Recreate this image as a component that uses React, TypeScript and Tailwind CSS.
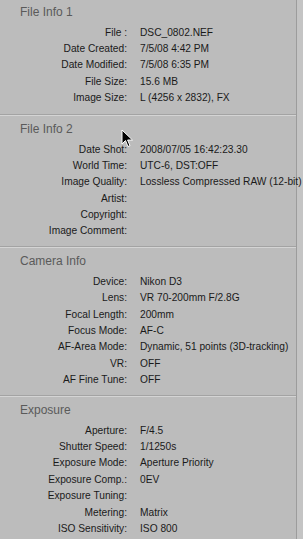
import React from 'react';

type Row = { label: string; value?: string };

const sections: { title: string; rows: Row[] }[] = [
  {
    title: 'File Info 1',
    rows: [
      { label: 'File :', value: 'DSC_0802.NEF' },
      { label: 'Date Created:', value: '7/5/08 4:42 PM' },
      { label: 'Date Modified:', value: '7/5/08 6:35 PM' },
      { label: 'File Size:', value: '15.6 MB' },
      { label: 'Image Size:', value: 'L (4256 x 2832), FX' },
    ],
  },
  {
    title: 'File Info 2',
    rows: [
      { label: 'Date Shot:', value: '2008/07/05 16:42:23.30' },
      { label: 'World Time:', value: 'UTC-6, DST:OFF' },
      { label: 'Image Quality:', value: 'Lossless Compressed RAW (12-bit)' },
      { label: 'Artist:' },
      { label: 'Copyright:' },
      { label: 'Image Comment:' },
    ],
  },
  {
    title: 'Camera Info',
    rows: [
      { label: 'Device:', value: 'Nikon D3' },
      { label: 'Lens:', value: 'VR 70-200mm F/2.8G' },
      { label: 'Focal Length:', value: '200mm' },
      { label: 'Focus Mode:', value: 'AF-C' },
      { label: 'AF-Area Mode:', value: 'Dynamic, 51 points (3D-tracking)' },
      { label: 'VR:', value: 'OFF' },
      { label: 'AF Fine Tune:', value: 'OFF' },
    ],
  },
  {
    title: 'Exposure',
    rows: [
      { label: 'Aperture:', value: 'F/4.5' },
      { label: 'Shutter Speed:', value: '1/1250s' },
      { label: 'Exposure Mode:', value: 'Aperture Priority' },
      { label: 'Exposure Comp.:', value: '0EV' },
      { label: 'Exposure Tuning:' },
      { label: 'Metering:', value: 'Matrix' },
      { label: 'ISO Sensitivity:', value: 'ISO 800' },
    ],
  },
];

function Cursor() {
  return (
    <svg
      className="absolute left-[121px] top-[129px]"
      width="13"
      height="19"
      viewBox="0 0 13 19"
    >
      <path
        d="M1 1 L1 15 L4.5 11.5 L7 17.5 L9 16.6 L6.6 11 L11.5 11 Z"
        fill="#000"
        stroke="#fff"
        strokeWidth="1"
        strokeLinejoin="round"
      />
    </svg>
  );
}

export default function App() {
  return (
    <div className="relative h-[539px] w-[303px] overflow-hidden bg-[#c4c4c4] font-['Liberation_Sans',Arial,sans-serif]">
      {/* info panel, right strip is the outer bg */}
      <div className="h-full w-[297px] border-r border-[#9c9c9c] bg-[#bcbcbc]">
        {sections.map((section, i) => (
          <div
            key={section.title}
            className={
              i === 0
                ? 'border-b border-[#a3a3a3] pb-[8px] pt-[2px] shadow-[0_1px_0_#d4d4d4]'
                : 'border-b border-[#a3a3a3] pb-[7px] pt-[4px] shadow-[0_1px_0_#d4d4d4]'
            }
          >
            <h2 className="pl-[20px] text-[12px] leading-[20px] text-[#5a5a5a]">
              {section.title}
            </h2>
            <div className="mt-[2px] flex flex-col">
              {section.rows.map((row) => (
                <div
                  key={row.label}
                  className="flex h-[16.4px] items-center text-[10.2px] text-[#1a1a1a]"
                >
                  <span className="w-[127px] shrink-0 text-right">{row.label}</span>
                  <span className="ml-[13px] whitespace-nowrap">{row.value}</span>
                </div>
              ))}
            </div>
          </div>
        ))}
      </div>
      <Cursor />
    </div>
  );
}
